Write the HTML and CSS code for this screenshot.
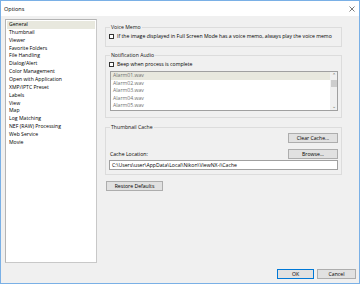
FILE: index.html
```html
<!DOCTYPE html>
<html lang="en">
<head>
    <meta charset="UTF-8">
    <meta name="viewport" content="width=device-width, initial-scale=1.0">
    <title>Options</title>
    <link rel="stylesheet" href="styles.css">
</head>
<body>
<div class="window">
    <div class="titlebar">
        <span class="title">Options</span>
        <svg class="close" width="6" height="6" viewBox="0 0 6 6"><path d="M0.5 0.5L5.5 5.5M5.5 0.5L0.5 5.5" stroke="#222" stroke-width="0.6"/></svg>
    </div>
    <div class="content">
        <div class="main">
            <ul class="pages">
                <li class="sel">General</li>
                <li>Thumbnail</li>
                <li>Viewer</li>
                <li>Favorite Folders</li>
                <li>File Handling</li>
                <li>Dialog/Alert</li>
                <li>Color Management</li>
                <li>Open with Application</li>
                <li>XMP/IPTC Preset</li>
                <li>Labels</li>
                <li>View</li>
                <li>Map</li>
                <li>Log Matching</li>
                <li>NEF (RAW) Processing</li>
                <li>Web Service</li>
                <li>Movie</li>
            </ul>
            <div class="panel">
                <fieldset class="group voice">
                    <legend>Voice Memo</legend>
                    <div class="check"><span class="box"></span>If the image displayed in Full Screen Mode has a voice memo, always play the voice memo</div>
                </fieldset>
                <fieldset class="group audio">
                    <legend>Notification Audio</legend>
                    <div class="check"><span class="box"></span>Beep when process is complete</div>
                    <div class="sounds">
                        <ul class="sound-list">
                            <li class="sel">Alarm01.wav</li>
                            <li>Alarm02.wav</li>
                            <li>Alarm03.wav</li>
                            <li>Alarm04.wav</li>
                            <li>Alarm05.wav</li>
                        </ul>
                        <div class="scrollbar">
                            <span class="arrow">&#8963;</span>
                            <span class="thumb"></span>
                            <span class="arrow down">&#8964;</span>
                        </div>
                    </div>
                </fieldset>
                <fieldset class="group cache">
                    <legend>Thumbnail Cache</legend>
                    <div class="row right"><button class="btn wide">Clear Cache...</button></div>
                    <div class="row between">
                        <span>Cache Location:</span>
                        <button class="btn wide">Browse...</button>
                    </div>
                    <div class="field">C:\Users\user\AppData\Local\Nikon\ViewNX-i\Cache</div>
                </fieldset>
                <button class="btn restore">Restore Defaults</button>
            </div>
        </div>
        <div class="footer">
            <button class="btn ok">OK</button>
            <button class="btn cancel">Cancel</button>
        </div>
    </div>
</div>
</body>
</html>
```

FILE: styles.css
```css
*{
    box-sizing: border-box;
}
body{
    margin: 0;
    font-family: "Open Sans", "Noto Sans", sans-serif;
    font-size: 5.15px;
    color: #000;
}
.window{
    width: 360px;
    height: 284px;
    border: 1px solid #7ab0e6;
    background: #f0f0f0;
    display: flex;
    flex-direction: column;
}
.titlebar{
    height: 15px;
    background: #fff;
    display: flex;
    align-items: center;
    justify-content: space-between;
    padding: 0 4px 0 3px;
}
.title{
    font-size: 5.5px;
}
.content{
    flex: 1;
    display: flex;
    flex-direction: column;
    padding: 3px 3px 4px 4px;
}
.main{
    display: flex;
    height: 244px;
}
/* left list */
.pages{
    list-style: none;
    margin: 0;
    padding: 1px 1px;
    width: 92px;
    height: 244px;
    background: #fff;
    border: 1px solid #b4b4b4;
    border-right-color: #c8c8c8;
    border-bottom-color: #c8c8c8;
}
.pages li{
    height: 7.87px;
    line-height: 7.87px;
    padding-left: 2px;
}
.pages li.sel{
    background: #e8e8de;
}
/* right panel */
.panel{
    margin-left: 8px;
    width: 237px;
    padding-top: 4px;
}
.group{
    margin: 0 0 0 0;
    padding: 0 2px 4px 2px;
    border: 1px solid #dcdcdc;
    min-width: 0;
}
.group legend{
    padding: 0 1px;
    margin-left: 2px;
    line-height: 8px;
    color: #111;
}
.check{
    display: flex;
    align-items: center;
    height: 8px;
    padding-left: 1px;
    margin-top: 1px;
    white-space: nowrap;
}
.box{
    width: 5px;
    height: 5px;
    border: 0.7px solid #333;
    background: #fff;
    margin-right: 3px;
    flex: none;
}
.voice{
    height: 24px;
}
.audio{
    margin-top: 4px;
    height: 67px;
}
.sounds{
    display: flex;
    margin: 3px 1px 0 2px;
    height: 40px;
    border: 1px solid #a0a0a0;
    background: #fff;
}
.sound-list{
    list-style: none;
    margin: 0;
    padding: 0;
    flex: 1;
    color: #707070;
}
.sound-list li{
    height: 7.6px;
    line-height: 7.6px;
    padding-left: 2px;
}
.sound-list li.sel{
    background: #e8e8de;
}
.scrollbar{
    width: 7px;
    background: #f0f0f0;
    display: flex;
    flex-direction: column;
    align-items: center;
}
.arrow{
    height: 7px;
    line-height: 7px;
    font-size: 5px;
    color: #606060;
}
.down{
    margin-top: auto;
}
.thumb{
    width: 6px;
    height: 7px;
    background: #cdcdcd;
    margin-top: 1px;
}
.cache{
    margin-top: 5px;
    height: 52px;
    padding-bottom: 0;
}
.row{
    display: flex;
    align-items: center;
    padding: 0 1px 0 2px;
}
.right{
    justify-content: flex-end;
    margin-top: 2px;
}
.between{
    justify-content: space-between;
    margin-top: 6px;
}
.btn{
    font-family: inherit;
    font-size: 5.15px;
    color: #000;
    height: 10px;
    line-height: 8px;
    padding: 0;
    background: #e1e1e1;
    border: 1px solid #adadad;
}
.wide{
    width: 50px;
}
.field{
    margin: 1px 1px 0 1px;
    height: 10px;
    line-height: 8px;
    padding-left: 2px;
    background: #fff;
    border: 1px solid #a0a0a0;
}
.restore{
    margin-top: 6px;
    margin-left: 1px;
    width: 57px;
}
.footer{
    margin-top: auto;
    display: flex;
    justify-content: flex-end;
    gap: 3px;
}
.ok{
    width: 37px;
    border-color: #0078d7;
}
.cancel{
    width: 39px;
}
```
